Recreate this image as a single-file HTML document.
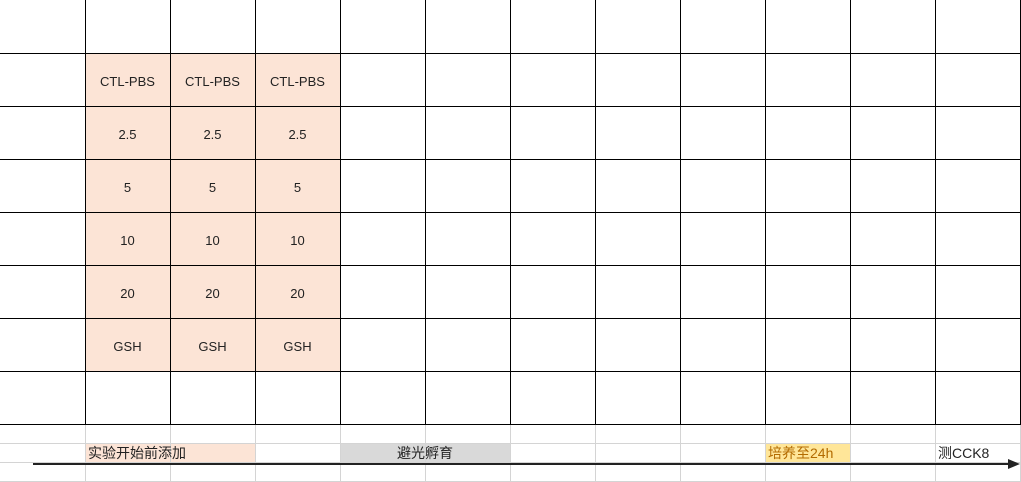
<!DOCTYPE html>
<html><head><meta charset="utf-8"><style>
body{margin:0;width:1021px;height:482px;background:#fff;position:relative;overflow:hidden;font-family:"Liberation Sans","Noto Sans CJK SC",sans-serif;}
div{position:absolute;}
.v{width:1px;background:#000;top:0;height:425px}
.h{height:1px;background:#000;left:0;width:1021px}
.lv{width:1px;background:#d4d4d4;top:425px;height:57px}
.lh{height:1px;background:#d4d4d4;left:0;width:1021px}
.c{width:85px;height:53px;line-height:53px;text-align:center;font-size:13px;color:#222}
</style></head><body>
<div style="left:85px;top:53px;width:255px;height:318px;background:#fce4d6"></div>
<div style="left:85px;top:443px;width:170px;height:19px;background:#fce4d6"></div>
<div style="left:340px;top:443px;width:170px;height:19px;background:#d9d9d9"></div>
<div style="left:765px;top:443px;width:85px;height:19px;background:#ffe699"></div>

<div class="v" style="left:85px"></div><div class="v" style="left:170px"></div><div class="v" style="left:255px"></div><div class="v" style="left:340px"></div><div class="v" style="left:425px"></div><div class="v" style="left:510px"></div><div class="v" style="left:595px"></div><div class="v" style="left:680px"></div><div class="v" style="left:765px"></div><div class="v" style="left:850px"></div><div class="v" style="left:935px"></div><div class="v" style="left:1020px"></div>
<div class="h" style="top:53px"></div><div class="h" style="top:106px"></div><div class="h" style="top:159px"></div><div class="h" style="top:212px"></div><div class="h" style="top:265px"></div><div class="h" style="top:318px"></div><div class="h" style="top:371px"></div><div class="h" style="top:424px"></div>

<div class="lv" style="left:85px"></div><div class="lv" style="left:170px"></div><div class="lv" style="left:255px"></div><div class="lv" style="left:340px"></div><div class="lv" style="left:425px"></div><div class="lv" style="left:510px"></div><div class="lv" style="left:595px"></div><div class="lv" style="left:680px"></div><div class="lv" style="left:765px"></div><div class="lv" style="left:850px"></div><div class="lv" style="left:935px"></div><div class="lv" style="left:1020px"></div>
<div class="lh" style="top:443px"></div><div class="lh" style="top:462px"></div><div class="lh" style="top:481px"></div>

<div class="c" style="left:85px;top:55px">CTL-PBS</div><div class="c" style="left:170px;top:55px">CTL-PBS</div><div class="c" style="left:255px;top:55px">CTL-PBS</div>
<div class="c" style="left:85px;top:108px">2.5</div><div class="c" style="left:170px;top:108px">2.5</div><div class="c" style="left:255px;top:108px">2.5</div>
<div class="c" style="left:85px;top:161px">5</div><div class="c" style="left:170px;top:161px">5</div><div class="c" style="left:255px;top:161px">5</div>
<div class="c" style="left:85px;top:214px">10</div><div class="c" style="left:170px;top:214px">10</div><div class="c" style="left:255px;top:214px">10</div>
<div class="c" style="left:85px;top:267px">20</div><div class="c" style="left:170px;top:267px">20</div><div class="c" style="left:255px;top:267px">20</div>
<div class="c" style="left:85px;top:320px">GSH</div><div class="c" style="left:170px;top:320px">GSH</div><div class="c" style="left:255px;top:320px">GSH</div>

<div style="left:88px;top:444px;font-size:14px;line-height:18px;color:#222">实验开始前添加</div>
<div style="left:340px;top:444px;width:170px;text-align:center;font-size:14px;line-height:18px;color:#222">避光孵育</div>
<div style="left:768px;top:444px;font-size:14px;line-height:18px;color:#b36b00">培养至24h</div>
<div style="left:938px;top:444px;font-size:14px;line-height:18px;color:#222">测CCK8</div>

<div style="left:33px;top:463px;width:978px;height:2px;background:#222"></div>
<svg style="position:absolute;left:1008px;top:459px" width="13" height="11"><polygon points="0,0 12,5 0,10" fill="#222"/></svg>
</body></html>
